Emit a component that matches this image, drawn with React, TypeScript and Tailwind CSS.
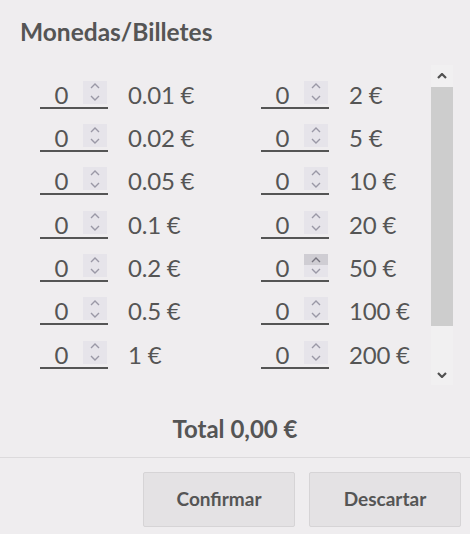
import React from "react";

const COINS = ["0.01 €", "0.02 €", "0.05 €", "0.1 €", "0.2 €", "0.5 €", "1 €"];
const NOTES = ["2 €", "5 €", "10 €", "20 €", "50 €", "100 €", "200 €"];

const Chevron = ({ up, bold }: { up?: boolean; bold?: boolean }) => (
  <svg width="10" height="6" viewBox="0 0 10 6">
    <path
      d={up ? "M1 5 L5 1 L9 5" : "M1 1 L5 5 L9 1"}
      fill="none"
      stroke="currentColor"
      strokeWidth={bold ? 2.2 : 1.4}
    />
  </svg>
);

const Spinner = ({ hover }: { hover?: boolean }) => (
  <div className="flex flex-col w-[24px] h-[23px] bg-[#e6e4ea] text-[#9a98a6]">
    <div className={`flex-1 flex items-center justify-center ${hover ? "bg-[#cfcdd3] text-[#77757f]" : ""}`}>
      <Chevron up />
    </div>
    <div className="flex-1 flex items-center justify-center">
      <Chevron />
    </div>
  </div>
);

const Cell = ({ label, hover }: { label: string; hover?: boolean }) => (
  <div className="flex items-center h-[43.33px]">
    <div className="flex items-end w-[68px] h-[28px] border-b-2 border-[#555]">
      <span className="w-[43px] text-center text-[24px] leading-[24px]">0</span>
      <div className="mb-[3px]">
        <Spinner hover={hover} />
      </div>
    </div>
    <span className="ml-[20px] text-[24px] tracking-[-0.2px]">{label}</span>
  </div>
);

export default function App() {
  return (
    <div className="w-[470px] h-[534px] bg-[#efedef] flex flex-col font-['Lato',sans-serif] text-[#555]">
      <h2 className="pl-[20px] pt-[17px] text-[24.5px] font-bold leading-[30px]">Monedas/Billetes</h2>

      <div className="flex mt-[18px] h-[320px]">
        <div className="flex-1 grid grid-cols-[221px_1fr] pl-[40px] pt-[8px] content-start">
          <div className="flex flex-col">
            {COINS.map((c) => (
              <Cell key={c} label={c} />
            ))}
          </div>
          <div className="flex flex-col">
            {NOTES.map((n) => (
              <Cell key={n} label={n} hover={n === "50 €"} />
            ))}
          </div>
        </div>

        {/* scrollbar */}
        <div className="w-[22px] mr-[17px] flex flex-col bg-[#f1f0f1] text-[#505050]">
          <div className="h-[22px] flex items-center justify-center">
            <Chevron up bold />
          </div>
          <div className="h-[239px] bg-[#cdcdcd]" />
          <div className="flex-1" />
          <div className="h-[20px] flex items-center justify-center">
            <Chevron bold />
          </div>
        </div>
      </div>

      <div className="flex-1 flex items-center justify-center pt-[16px] text-[24px] font-bold">Total 0,00 €</div>

      <div className="border-t border-[#dcdadc] flex justify-end gap-[14px] pt-[14px] pb-[7px] pr-[9px]">
        <button className="w-[152px] h-[55px] bg-[#e4e2e4] border border-[#d6d4d6] rounded-[2px] text-[19px] font-bold text-[#555]">
          Confirmar
        </button>
        <button className="w-[152px] h-[55px] bg-[#e4e2e4] border border-[#d6d4d6] rounded-[2px] text-[19px] font-bold text-[#555]">
          Descartar
        </button>
      </div>
    </div>
  );
}
